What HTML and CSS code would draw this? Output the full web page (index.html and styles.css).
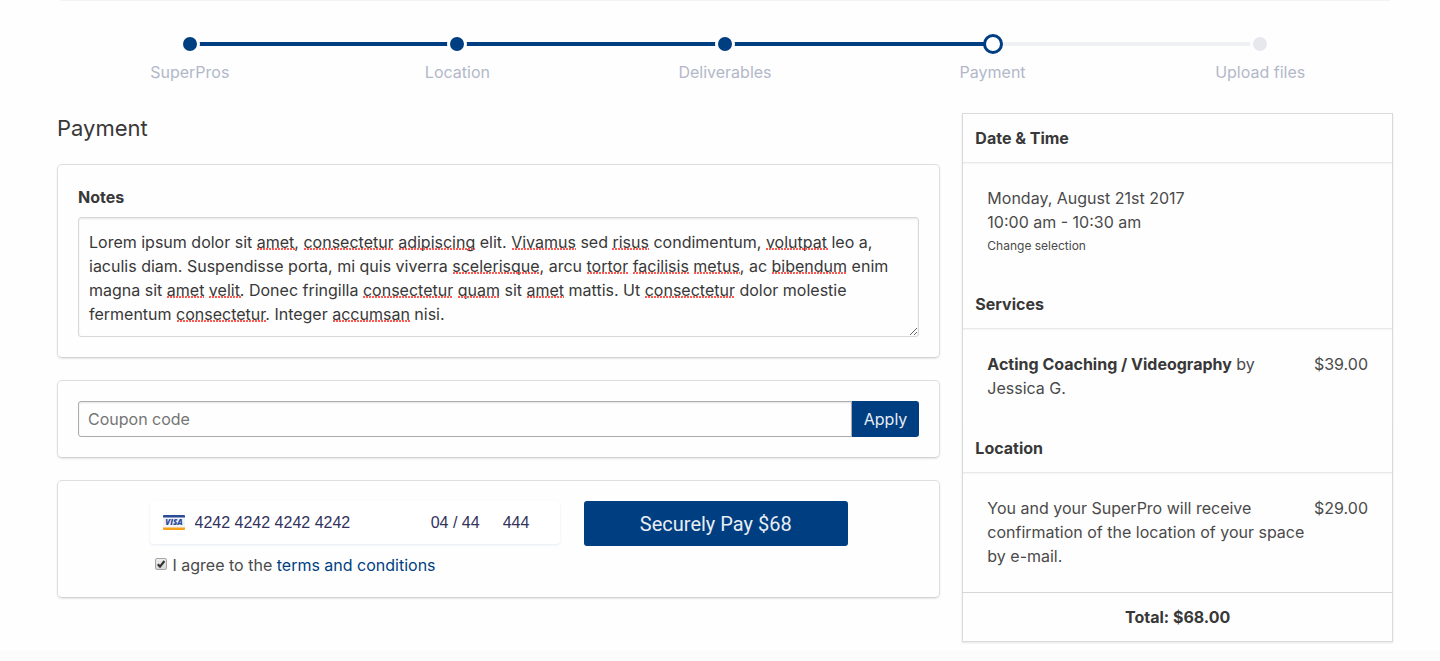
FILE: index.html
```html
<!DOCTYPE html>
<html lang="en">
<head>
<meta charset="utf-8">
<meta name="viewport" content="width=device-width, initial-scale=1">
<title>Payment</title>
<link rel="stylesheet" href="styles.css">
</head>
<body>
<div class="page">
  <hr class="rule">
  <ol class="steps">
    <li class="step done"><span class="dot"></span><span>SuperPros</span></li>
    <li class="step done"><span class="dot"></span><span>Location</span></li>
    <li class="step done"><span class="dot"></span><span>Deliverables</span></li>
    <li class="step current" aria-current="step"><span class="dot"></span><span>Payment</span></li>
    <li class="step"><span class="dot"></span><span>Upload files</span></li>
  </ol>
  <div class="columns">
    <main class="main">
      <h1 class="title">Payment</h1>
      <section class="card">
        <label class="notes-label" for="notes">Notes</label>
        <div class="notes">
          <textarea id="notes" class="notes-input" rows="4" spellcheck="false">Lorem ipsum dolor sit amet, consectetur adipiscing elit. Vivamus sed risus condimentum, volutpat leo a, iaculis diam. Suspendisse porta, mi quis viverra scelerisque, arcu tortor facilisis metus, ac bibendum enim magna sit amet velit. Donec fringilla consectetur quam sit amet mattis. Ut consectetur dolor molestie fermentum consectetur. Integer accumsan nisi.</textarea>
          <svg class="spelling" aria-hidden="true">
            <path d="M179 32h38M226 32h90M321 32h76M434 32h64M534 32h37M688 32h62"/>
            <path d="M375 56h87M509 56h41M555 56h56M616 56h46M694 56h75"/>
            <path d="M89 80h37M131 80h32M285 80h90M380 80h42M449 80h37M567 80h90"/>
            <path d="M99 104h89M255 104h77"/>
          </svg>
        </div>
      </section>
      <form class="card coupon">
        <input class="coupon-input" type="text" placeholder="Coupon code" aria-label="Coupon code">
        <button class="apply" type="button">Apply</button>
      </form>
      <form class="card">
        <div class="pay">
          <div class="card-fields">
            <svg class="visa" viewBox="0 0 22 15" role="img" aria-label="Visa">
              <rect width="22" height="15" rx="1" fill="#f1f4f9"/>
              <path d="M0 2.500V1a1 1 0 0 1 1-1h20a1 1 0 0 1 1 1v1.500z" fill="#2b4b99"/>
              <path d="M0 12.500h22V14a1 1 0 0 1-1 1H1a1 1 0 0 1-1-1z" fill="#f7a11b"/>
              <text class="visa-text" x="11" y="10" text-anchor="middle">VISA</text>
            </svg>
            <input class="field number" type="text" value="4242 4242 4242 4242" aria-label="Card number">
            <input class="field expiry" type="text" value="04 / 44" aria-label="Expiry date">
            <input class="field cvc" type="text" value="444" aria-label="Security code">
          </div>
          <button class="pay-button" type="button">Securely Pay $68</button>
          <div class="agree">
            <span class="tick">
              <input id="agree" class="tick-input" type="checkbox" checked>
              <svg class="tick-mark" viewBox="0 0 12 12" aria-hidden="true"><path d="M2.800 6.200 5 8.600 9.400 3" fill="none" stroke="#333" stroke-width="2.200"/></svg>
            </span>
            <label for="agree">I agree to the <a href="#terms">terms and conditions</a></label>
          </div>
        </div>
      </form>
    </main>
    <aside class="side">
      <div class="summary">
        <h2 class="head">Date &amp; Time</h2>
        <div class="item">
          <div>
            <div>Monday, August 21st 2017</div>
            <div>10:00 am - 10:30 am</div>
            <a class="change" href="#change">Change selection</a>
          </div>
        </div>
        <h2 class="head">Services</h2>
        <div class="item">
          <div class="what"><strong>Acting Coaching / Videography</strong> by Jessica G.</div>
          <div>$39.00</div>
        </div>
        <h2 class="head">Location</h2>
        <div class="item">
          <div class="what">You and your SuperPro will receive confirmation of the location of your space by e-mail.</div>
          <div>$29.00</div>
        </div>
        <div class="total">Total: $68.00</div>
      </div>
    </aside>
  </div>
</div>
<footer class="footer"></footer>
</body>
</html>
```
FILE: styles.css
```css
* { box-sizing: border-box; }

body {
  margin: 0;
  background: #fefefe;
  color: #4a4a4a;
  font: 16px/24px Inter, "Liberation Sans", sans-serif;
}

button, input, textarea { font: inherit; color: inherit; margin: 0; }
a { color: #003e82; text-decoration: none; }

.page { padding: 0 47px 9px 57px; }

.rule { margin: 0 3px; border: 0; border-top: 1px solid #f3f3f3; }

.steps {
  display: flex;
  margin: 0 -1px;
  padding: 32px 0 0;
  list-style: none;
  color: #b2b8c9;
}
.step {
  position: relative;
  flex: 1;
  display: flex;
  flex-direction: column;
  align-items: center;
  gap: 5px;
}
.step::before {
  content: "";
  position: absolute;
  top: 9px;
  right: 50%;
  width: 100%;
  height: 4px;
  background: #003e82;
}
.step:first-child::before { display: none; }
.step:last-child::before { background: #f0f1f4; }
.dot {
  position: relative;
  z-index: 1;
  width: 20px;
  height: 22px;
  border: 3px solid #fefefe;
  border-width: 4px 3px;
  border-radius: 50%;
  background: #e6e8ed;
}
.done .dot { background: #003e82; }
.current .dot { border: 3px solid #003e82; background: #fefefe; height: 20px; margin: 1px 0; }

.columns { display: flex; margin: 0 -11px; padding-top: 29px; align-items: flex-start; }
.main { width: 66.6667%; padding: 0 11px; }
.side { width: 33.3333%; padding: 0 11px; }

.title { margin: 0 0 21px; color: #383838; font-size: 22px; line-height: 30px; font-weight: 400; }

.card {
  margin: 0 0 22px;
  padding: 20px;
  border: 1px solid #dedede;
  border-bottom-color: #d2d2d2;
  border-radius: 5px;
  box-shadow: 0 1px 2px #0000001a;
}

.notes-label { display: block; margin-bottom: 8px; color: #383838; font-weight: 700; }
.notes { display: grid; }
.spelling, .notes-input { grid-area: 1 / 1; width: 100%; }
.spelling {
  height: 112px;
  z-index: 1;
  pointer-events: none;
  fill: none;
  stroke: #ff5a52;
  stroke-width: 2px;
  stroke-dasharray: 2px 1px;
}
.notes-input {
  display: block;
  padding: 12px 10px 10px;
  border: 1px solid #d6d8d9;
  border-radius: 3px;
  line-height: 24px;
  resize: vertical;
  overflow: hidden;
  background: transparent;
  box-shadow: inset 0 1px 2px #0000001a;
  color: #383838;
}

.coupon { display: flex; }
.coupon-input {
  flex: 1;
  min-width: 0;
  height: 36px;
  padding: 0 9px;
  border: 1px solid #acacac;
  border-radius: 3px 0 0 3px;
  background: #fefefe;
  box-shadow: inset 0 1px 2px #0000001a;
}
.coupon-input::placeholder { color: #757575; }
.apply {
  padding: 0 12px;
  border: 0;
  border-radius: 0 3px 3px 0;
  background: #003e82;
  color: #e8edf3;
}

.pay {
  display: grid;
  grid-template-columns: minmax(0, 410fr) minmax(0, 264fr);
  column-gap: 24px;
  row-gap: 7px;
  width: 83%;
  margin: 0 auto;
}
.card-fields {
  display: flex;
  align-items: center;
  height: 43px;
  padding: 0 13px;
  border-radius: 4px;
  background: #fff;
  box-shadow: 0 1px 3px #e6ebf1;
}
.visa { flex: none; width: 22px; height: 15px; margin-right: 10px; }
.visa-text { font: italic 900 8px "Open Sans", sans-serif; fill: #2b4b99; }
.field {
  min-width: 0;
  padding: 0;
  border: 0;
  background: transparent;
  color: #32325d;
  font-family: "Liberation Sans", sans-serif;
}
.number { flex: 1; }
.expiry { width: 72px; }
.cvc { width: 44px; }
.pay-button {
  height: 45px;
  padding: 0;
  border: 0;
  border-radius: 3px;
  background: #003e82;
  color: #e8edf3;
  font-family: Roboto, sans-serif;
  font-size: 20px;
}
.agree { display: flex; gap: 6px; padding-left: 5px; }
.tick { position: relative; width: 12px; height: 12px; margin-top: 5px; }
.tick-input {
  display: block;
  width: 12px;
  height: 12px;
  appearance: none;
  border: 1px solid #a6a6a6;
  border-radius: 2px;
  background: linear-gradient(#eee, #d8d8d8);
}
.tick-mark { position: absolute; inset: 0; pointer-events: none; visibility: hidden; }
.tick-input:checked + .tick-mark { visibility: visible; }

.summary { border: 1px solid #dadada; box-shadow: 0 1px 2px #0000001a; }
.head {
  margin: 0;
  padding: 12px;
  color: #383838;
  font-size: 16px;
  line-height: 24px;
  font-weight: 700;
  border-bottom: 1px solid #e9e9e9;
  box-shadow: 0 1px 1px #00000008;
}
.item { display: flex; justify-content: space-between; gap: 8px; padding: 23px 24px 24px; }
.what { max-width: 320px; }
.item strong { color: #383838; font-weight: 700; }
.change { display: block; padding-top: 2px; color: inherit; font-size: 12px; line-height: 20px; }
.total {
  padding: 12px;
  border-top: 1px solid #d6d6d6;
  color: #383838;
  font-weight: 700;
  text-align: center;
}
.footer { height: 10px; background: #fcfcfc; }
```
